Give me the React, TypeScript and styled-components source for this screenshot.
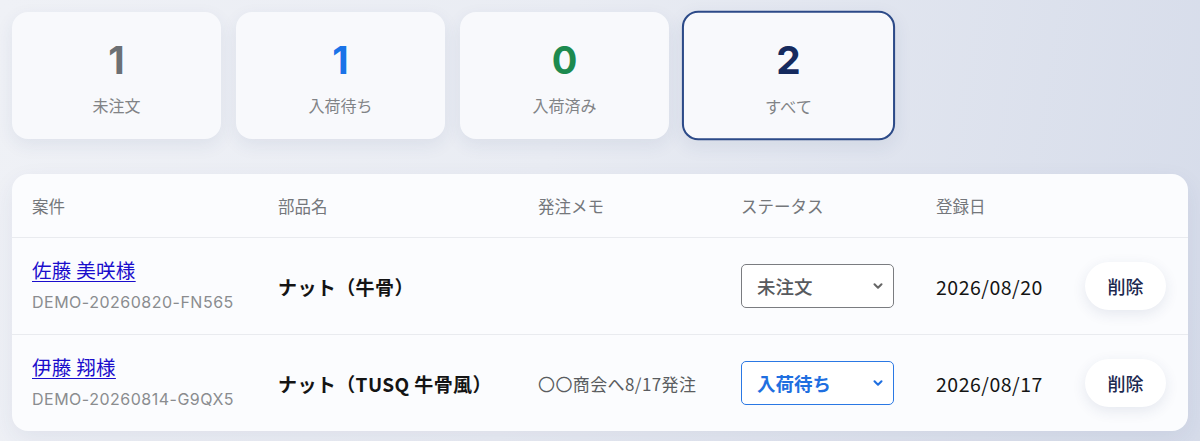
import React from 'react';
import styled, { createGlobalStyle } from 'styled-components';
import { ChevronDown } from 'lucide-react';

const GlobalStyle = createGlobalStyle`
  html, body {
    margin: 0;
    padding: 0;
  }
  body {
    font-family: 'Noto Sans CJK JP', 'Inter', sans-serif;
    background: linear-gradient(100deg, #eff1f6 0%, #e9ecf3 45%, #d6dcea 100%);
    min-height: 441px;
  }
`;

const Page = styled.div`
  padding: 12px;
  display: flex;
  flex-direction: column;
  gap: 35px;
`;

const Cards = styled.div`
  display: flex;
  gap: 15px;
`;

const Card = styled.div<{ active?: boolean }>`
  width: 209px;
  height: 127px;
  box-sizing: border-box;
  border-radius: 16px;
  background: #f8f9fc;
  display: flex;
  flex-direction: column;
  align-items: center;
  justify-content: center;
  gap: 14px;
  padding-top: 2px;
  border: ${({ active }) => (active ? '2px solid #2c4a88' : '2px solid transparent')};
  transform: ${({ active }) => (active ? 'scale(1.02)' : 'none')};
  box-shadow: 0 6px 18px rgba(40, 60, 110, 0.08);
`;

const Count = styled.div<{ color: string }>`
  font-family: 'Inter', sans-serif;
  font-size: 38px;
  font-weight: 700;
  line-height: 42px;
  color: ${({ color }) => color};
`;

const CardLabel = styled.div`
  font-size: 16px;
  color: #818386;
  line-height: 20px;
`;

const Panel = styled.div`
  background: #fbfcfe;
  border-radius: 16px;
  box-shadow: 0 8px 24px rgba(40, 60, 110, 0.07);
  overflow: hidden;
`;

const Row = styled.div<{ head?: boolean }>`
  display: grid;
  grid-template-columns: 246px 260px 203px 195px 1fr auto;
  align-items: center;
  padding: 0 22px 0 20px;
  height: ${({ head }) => (head ? '63px' : '96px')};
  border-bottom: 1.5px solid #e9ebef;
  &:last-child {
    border-bottom: none;
  }
`;

const HeadCell = styled.div`
  font-size: 16.5px;
  color: #74777b;
`;

const CaseCell = styled.div`
  display: flex;
  flex-direction: column;
  gap: 10px;
  padding-bottom: 2px;
`;

const NameLink = styled.a`
  font-size: 19.5px;
  color: #1a0dcc;
  text-decoration: underline;
  text-underline-offset: 3px;
  line-height: 24px;
  letter-spacing: 0.3px;
`;

const CaseId = styled.div`
  font-family: 'Inter', sans-serif;
  font-size: 16px;
  line-height: 20px;
  color: #8a8c8f;
  letter-spacing: 0.5px;
`;

const PartName = styled.div`
  font-size: 19px;
  font-weight: 700;
  color: #141414;
  letter-spacing: 0.4px;
`;

const Memo = styled.div`
  font-size: 17px;
  color: #5a5c60;
  letter-spacing: 0.4px;
`;

const SelectWrap = styled.div`
  position: relative;
  width: 153px;
`;

const Select = styled.select<{ tone: 'gray' | 'blue' }>`
  appearance: none;
  width: 153px;
  height: 44px;
  box-sizing: border-box;
  padding: 0 30px 0 15px;
  border-radius: 5px;
  background: #ffffff;
  font-family: 'Noto Sans CJK JP', sans-serif;
  font-size: 18.5px;
  font-weight: ${({ tone }) => (tone === 'blue' ? 700 : 500)};
  color: ${({ tone }) => (tone === 'blue' ? '#1f6fe0' : '#575a5e')};
  border: 1.5px solid ${({ tone }) => (tone === 'blue' ? '#2a78e4' : '#7a7c80')};
`;

const Chevron = styled(ChevronDown)<{ tone: 'gray' | 'blue' }>`
  position: absolute;
  right: 9px;
  top: 15px;
  width: 14px;
  height: 14px;
  stroke-width: 3.5;
  color: ${({ tone }) => (tone === 'blue' ? '#1f6fe0' : '#666')};
  pointer-events: none;
`;

const DateText = styled.div`
  font-size: 19.5px;
  color: #141414;
  letter-spacing: 0.5px;
`;

const DeleteButton = styled.button`
  width: 81px;
  height: 48px;
  border: none;
  border-radius: 24px;
  background: #ffffff;
  font-family: 'Noto Sans CJK JP', sans-serif;
  font-size: 18px;
  font-weight: 500;
  color: #1d2a50;
  box-shadow: 0 4px 14px rgba(40, 60, 110, 0.1);
  cursor: pointer;
`;

const counts = [
  { label: '未注文', value: 1, color: '#6c7074' },
  { label: '入荷待ち', value: 1, color: '#1a73e8' },
  { label: '入荷済み', value: 0, color: '#1d8a4f' },
  { label: 'すべて', value: 2, color: '#152a5e', active: true },
];

const orders = [
  {
    name: '佐藤 美咲様',
    id: 'DEMO-20260820-FN565',
    part: 'ナット（牛骨）',
    memo: '',
    status: '未注文',
    tone: 'gray' as const,
    date: '2026/08/20',
  },
  {
    name: '伊藤 翔様',
    id: 'DEMO-20260814-G9QX5',
    part: 'ナット（TUSQ 牛骨風）',
    memo: '〇〇商会へ8/17発注',
    status: '入荷待ち',
    tone: 'blue' as const,
    date: '2026/08/17',
  },
];

const statuses = ['未注文', '入荷待ち', '入荷済み'];

export default function App() {
  return (
    <>
      <GlobalStyle />
      <Page>
        <Cards>
          {counts.map((c) => (
            <Card key={c.label} active={c.active}>
              <Count color={c.color}>{c.value}</Count>
              <CardLabel>{c.label}</CardLabel>
            </Card>
          ))}
        </Cards>
        <Panel>
          <Row head>
            <HeadCell>案件</HeadCell>
            <HeadCell>部品名</HeadCell>
            <HeadCell>発注メモ</HeadCell>
            <HeadCell>ステータス</HeadCell>
            <HeadCell>登録日</HeadCell>
            <HeadCell />
          </Row>
          {orders.map((o) => (
            <Row key={o.id}>
              <CaseCell>
                <NameLink href="#">{o.name}</NameLink>
                <CaseId>{o.id}</CaseId>
              </CaseCell>
              <PartName>{o.part}</PartName>
              <Memo>{o.memo}</Memo>
              <SelectWrap>
                <Select tone={o.tone} defaultValue={o.status}>
                  {statuses.map((s) => (
                    <option key={s}>{s}</option>
                  ))}
                </Select>
                <Chevron tone={o.tone} />
              </SelectWrap>
              <DateText>{o.date}</DateText>
              <DeleteButton>削除</DeleteButton>
            </Row>
          ))}
        </Panel>
      </Page>
    </>
  );
}
